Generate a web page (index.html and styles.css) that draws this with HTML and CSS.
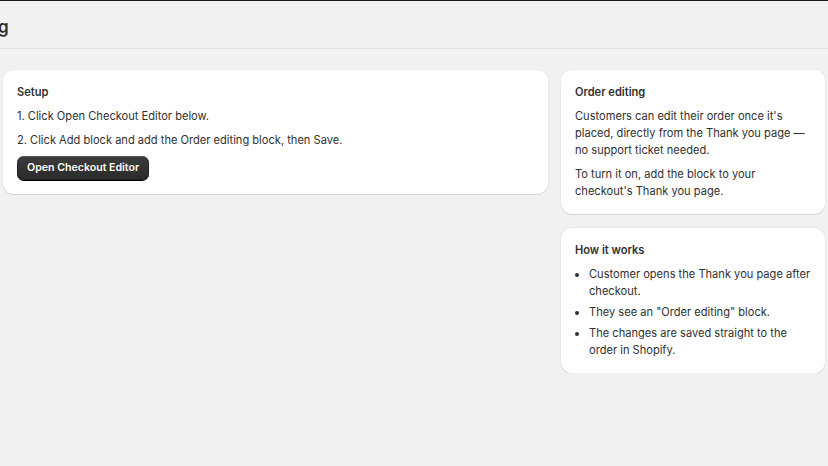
FILE: index.html
```html
<!DOCTYPE html>
<html lang="en">
<head>
  <meta charset="UTF-8">
  <meta name="viewport" content="width=device-width, initial-scale=1.0">
  <title>Order editing</title>
  <link rel="stylesheet" href="styles.css">
</head>
<body>
  <header class="page-header">
    <h1 class="page-title">Order editing</h1>
  </header>

  <main class="layout">
    <section class="card">
      <h2 class="card-title">Setup</h2>
      <p>1. Click Open Checkout Editor below.</p>
      <p>2. Click Add block and add the Order editing block, then Save.</p>
      <div class="actions">
        <button class="btn-primary" type="button">Open Checkout Editor</button>
      </div>
    </section>

    <aside class="side">
      <section class="card">
        <h2 class="card-title">Order editing</h2>
        <p>Customers can edit their order once it's placed, directly from the Thank you page — no support ticket needed.</p>
        <p>To turn it on, add the block to your checkout's Thank you page.</p>
      </section>

      <section class="card">
        <h2 class="card-title">How it works</h2>
        <ul class="steps">
          <li>Customer opens the Thank you page after checkout.</li>
          <li>They see an "Order editing" block.</li>
          <li>The changes are saved straight to the order in Shopify.</li>
        </ul>
      </section>
    </aside>
  </main>
</body>
</html>
```

FILE: styles.css
```css
*{
  margin: 0;
  padding: 0;
  box-sizing: border-box;
}
body{
  background-color: #f1f1f1;
  font-family: Inter, "Liberation Sans", sans-serif;
  font-size: 11.1px;
  line-height: 17px;
  color: #303030;
  border-top: 1px solid #1a1a1a;
  overflow: hidden;
}

/* page header */
.page-header{
  height: 48px;
  display: flex;
  align-items: center;
  padding-top: 5px;
  border-bottom: 1px solid #e3e3e3;
}
.page-title{
  font-size: 17px;
  font-weight: 600;
  line-height: 22px;
  margin-left: -99px;
  white-space: nowrap;
  color: #303030;
}

/* two column layout */
.layout{
  display: grid;
  grid-template-columns: 1fr 264px;
  align-items: start;
  gap: 13px;
  padding: 21px 3px 0 3px;
}
.side{
  display: flex;
  flex-direction: column;
  gap: 14px;
}

.card{
  background-color: #fff;
  border-radius: 11px;
  padding: 14px;
  display: flex;
  flex-direction: column;
  gap: 7px;
  box-shadow: 0 1px 0 0 rgba(26, 26, 26, 0.1), 0 0 0 1px rgba(26, 26, 26, 0.03);
}
.card-title{
  font-size: 11.1px;
  font-weight: 600;
  line-height: 17px;
}

.actions{
  display: flex;
}
.btn-primary{
  font-family: inherit;
  font-size: 10.6px;
  font-weight: 600;
  line-height: 14px;
  color: #fff;
  padding: 0 10px;
  height: 24px;
  border: none;
  border-radius: 7px;
  background: linear-gradient(#3d3d3d, #2a2a2a);
  box-shadow: 0 1px 0 0 #000, inset 0 1px 0 0 rgba(255, 255, 255, 0.25), inset 0 0 0 1px #1f1f1f;
  cursor: pointer;
}

.steps{
  padding-left: 14px;
  display: flex;
  flex-direction: column;
  gap: 4px;
}
```
